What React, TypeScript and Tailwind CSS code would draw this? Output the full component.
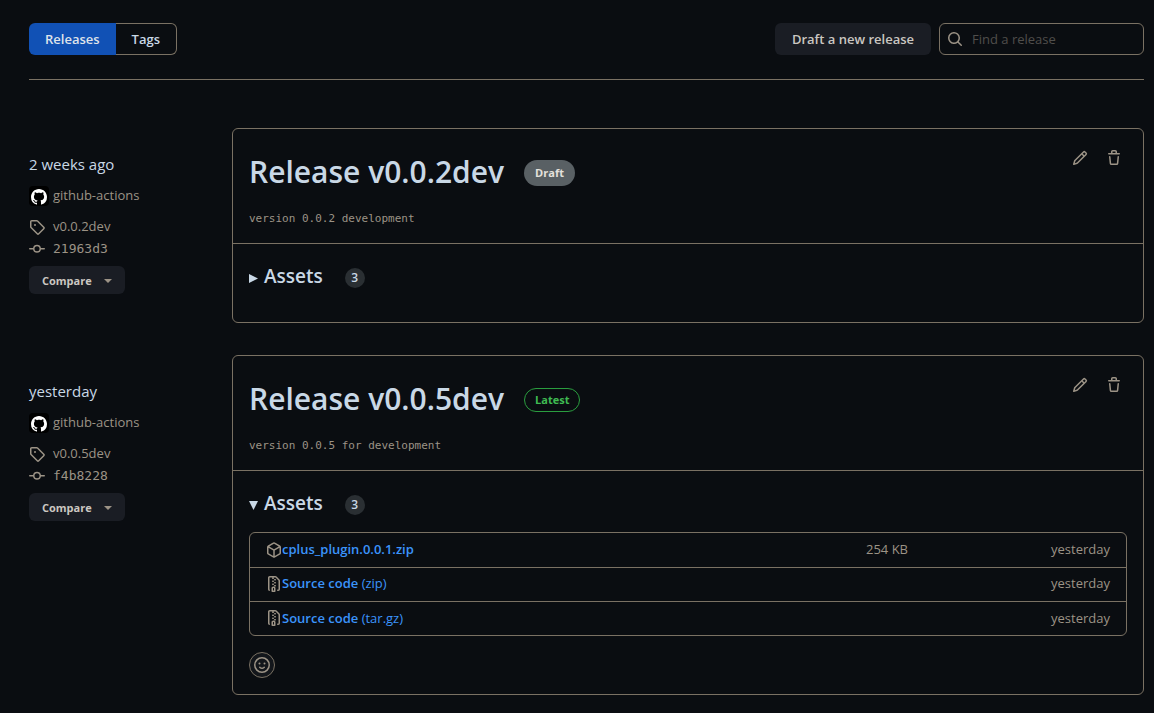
import { ReactNode } from "react";

const paths = {
  search:
    "M10.68 11.74a6 6 0 0 1-7.922-8.982 6 6 0 0 1 8.982 7.922l3.04 3.04a.749.749 0 0 1-.326 1.275.749.749 0 0 1-.734-.215ZM11.5 7a4.499 4.499 0 1 0-8.997 0A4.499 4.499 0 0 0 11.5 7Z",
  github:
    "M8 0c4.42 0 8 3.58 8 8a8.013 8.013 0 0 1-5.45 7.59c-.4.08-.55-.17-.55-.38 0-.27.01-1.13.01-2.2 0-.75-.25-1.23-.54-1.48 1.78-.2 3.65-.88 3.65-3.95 0-.88-.31-1.59-.82-2.15.08-.2.36-1.02-.08-2.12 0 0-.67-.22-2.2.82-.64-.18-1.32-.27-2-.27-.68 0-1.36.09-2 .27-1.53-1.03-2.2-.82-2.2-.82-.44 1.1-.16 1.92-.08 2.12-.51.56-.82 1.28-.82 2.15 0 3.06 1.86 3.75 3.64 3.95-.23.2-.44.55-.51 1.07-.46.21-1.61.55-2.33-.66-.15-.24-.6-.83-1.23-.82-.67.01-.27.38.01.53.34.19.73.9.82 1.13.16.45.68 1.31 2.69.94 0 .67.01 1.3.01 1.49 0 .21-.15.45-.55.38A7.995 7.995 0 0 1 0 8c0-4.42 3.58-8 8-8Z",
  tag: "M1 7.775V2.75C1 1.784 1.784 1 2.75 1h5.025c.464 0 .91.184 1.238.513l6.25 6.25a1.75 1.75 0 0 1 0 2.474l-5.026 5.026a1.75 1.75 0 0 1-2.474 0l-6.25-6.25A1.752 1.752 0 0 1 1 7.775Zm1.5 0c0 .066.026.13.073.177l6.25 6.25a.25.25 0 0 0 .354 0l5.025-5.025a.25.25 0 0 0 0-.354l-6.25-6.25a.25.25 0 0 0-.177-.073H2.75a.25.25 0 0 0-.25.25ZM6 5a1 1 0 1 1 0 2 1 1 0 0 1 0-2Z",
  commit:
    "M11.93 8.5a4.002 4.002 0 0 1-7.86 0H.75a.75.75 0 0 1 0-1.5h3.32a4.002 4.002 0 0 1 7.86 0h3.32a.75.75 0 0 1 0 1.5Zm-1.43-.75a2.5 2.5 0 1 0-5 0 2.5 2.5 0 0 0 5 0Z",
  pencil:
    "M11.013 1.427a1.75 1.75 0 0 1 2.474 0l1.086 1.086a1.75 1.75 0 0 1 0 2.474l-8.61 8.61c-.21.21-.47.364-.756.445l-3.251.93a.75.75 0 0 1-.927-.928l.929-3.25c.081-.286.235-.547.445-.758l8.61-8.61Zm.176 4.823L9.75 4.81l-6.286 6.287a.253.253 0 0 0-.064.108l-.558 1.953 1.953-.558a.253.253 0 0 0 .108-.064Zm1.238-3.763a.25.25 0 0 0-.354 0L10.811 3.75l1.439 1.44 1.263-1.263a.25.25 0 0 0 0-.354Z",
  trash:
    "M11 1.75V3h2.25a.75.75 0 0 1 0 1.5H2.75a.75.75 0 0 1 0-1.5H5V1.75C5 .784 5.784 0 6.75 0h2.5C10.216 0 11 .784 11 1.75ZM4.496 6.675l.66 6.6a.25.25 0 0 0 .249.225h5.19a.25.25 0 0 0 .249-.225l.66-6.6a.75.75 0 0 1 1.492.149l-.66 6.6A1.748 1.748 0 0 1 10.595 15h-5.19a1.75 1.75 0 0 1-1.741-1.575l-.66-6.6a.75.75 0 1 1 1.492-.15ZM6.5 1.75V3h3V1.75a.25.25 0 0 0-.25-.25h-2.5a.25.25 0 0 0-.25.25Z",
  package:
    "m8.878.392 5.25 3.045c.54.314.872.89.872 1.514v6.098a1.75 1.75 0 0 1-.872 1.514l-5.25 3.045a1.75 1.75 0 0 1-1.756 0l-5.25-3.045A1.75 1.75 0 0 1 1 11.049V4.951c0-.624.332-1.201.872-1.514L7.122.392a1.75 1.75 0 0 1 1.756 0ZM7.875 1.69l-4.63 2.685L8 7.133l4.755-2.758-4.63-2.685a.248.248 0 0 0-.25 0ZM2.5 5.677v5.372c0 .09.047.171.125.216l4.625 2.683V8.432Zm6.25 8.271 4.625-2.683a.25.25 0 0 0 .125-.216V5.677L8.75 8.432Z",
  zip: "M3.5 1.75v11.5c0 .09.048.173.126.217a.75.75 0 0 1-.752 1.298A1.748 1.748 0 0 1 2 13.25V1.75C2 .784 2.784 0 3.75 0h5.586c.464 0 .909.185 1.237.513l2.914 2.914c.329.328.513.773.513 1.237v8.586A1.75 1.75 0 0 1 12.25 15h-.5a.75.75 0 0 1 0-1.5h.5a.25.25 0 0 0 .25-.25V4.664a.25.25 0 0 0-.073-.177L9.513 1.573a.25.25 0 0 0-.177-.073H7.25a.75.75 0 0 1 0 1.5h-.5a.75.75 0 0 1 0-1.5h-3a.25.25 0 0 0-.25.25Zm3.75 8.75h.5c.966 0 1.75.784 1.75 1.75v3a.75.75 0 0 1-.75.75h-2.5a.75.75 0 0 1-.75-.75v-3c0-.966.784-1.75 1.75-1.75ZM6 5.25a.75.75 0 0 1 .75-.75h.5a.75.75 0 0 1 0 1.5h-.5A.75.75 0 0 1 6 5.25Zm.75 2.25h.5a.75.75 0 0 1 0 1.5h-.5a.75.75 0 0 1 0-1.5ZM8 6.75A.75.75 0 0 1 8.75 6h.5a.75.75 0 0 1 0 1.5h-.5A.75.75 0 0 1 8 6.75ZM8.75 3h.5a.75.75 0 0 1 0 1.5h-.5a.75.75 0 0 1 0-1.5ZM8 9.75A.75.75 0 0 1 8.75 9h.5a.75.75 0 0 1 0 1.5h-.5A.75.75 0 0 1 8 9.75Zm-1 2.5v2.25h1v-2.25a.25.25 0 0 0-.25-.25h-.5a.25.25 0 0 0-.25.25Z",
  smiley:
    "M8 0a8 8 0 1 1 0 16A8 8 0 0 1 8 0ZM1.5 8a6.5 6.5 0 1 0 13 0 6.5 6.5 0 0 0-13 0Zm3.82 1.636a.75.75 0 0 1 1.038.175l.007.009c.103.118.22.222.35.31.264.178.683.37 1.285.37.602 0 1.02-.192 1.285-.371.13-.088.247-.192.35-.31l.007-.008a.75.75 0 0 1 1.222.87c-.2.26-.44.49-.728.691-.474.322-1.18.63-2.126.63-.946 0-1.652-.308-2.126-.63a3.331 3.331 0 0 1-.729-.691.75.75 0 0 1 .189-1.055ZM6.5 6.5a1 1 0 1 1-2 0 1 1 0 0 1 2 0ZM11.5 6.5a1 1 0 1 1-2 0 1 1 0 0 1 2 0Z",
};

function Icon({ name, className = "size-4" }: { name: keyof typeof paths; className?: string }) {
  return (
    <svg viewBox="0 0 16 16" fill="currentColor" aria-hidden="true" className={`shrink-0 ${className}`}>
      <path d={paths[name]} />
    </svg>
  );
}

type Asset = { name: string; kind?: string; icon: "package" | "zip"; size?: string; date: string };

type Release = {
  date: string;
  tag: string;
  commit: string;
  notes: string;
  status: "Draft" | "Latest";
  assets?: Asset[];
};

const releases: Release[] = [
  { date: "2 weeks ago", tag: "v0.0.2dev", commit: "21963d3", notes: "version 0.0.2 development", status: "Draft" },
  {
    date: "yesterday",
    tag: "v0.0.5dev",
    commit: "f4b8228",
    notes: "version 0.0.5 for development",
    status: "Latest",
    assets: [
      { name: "cplus_plugin.0.0.1.zip", icon: "package", size: "254 KB", date: "yesterday" },
      { name: "Source code", kind: "(zip)", icon: "zip", date: "yesterday" },
      { name: "Source code", kind: "(tar.gz)", icon: "zip", date: "yesterday" },
    ],
  },
];

function MetaLink({ children, icon }: { children: ReactNode; icon: "tag" | "commit" }) {
  return (
    <a href="#" className="flex h-[22px] items-center gap-2">
      <Icon name={icon} />
      {children}
    </a>
  );
}

function Sidebar({ release }: { release: Release }) {
  return (
    <aside className="flex w-[203px] shrink-0 flex-col items-start pt-6 text-[13px] text-[#9c9386]">
      <div className="h-6 text-[15px] leading-6 text-[#c9d8e6]">{release.date}</div>
      <a href="#" className="mt-2 flex h-6 items-center gap-1">
        <span className="flex size-5 items-center justify-center rounded-sm bg-black pt-0.5 text-white">
          <Icon name="github" />
        </span>
        github-actions
      </a>
      <div className="mt-2">
        <MetaLink icon="tag">{release.tag}</MetaLink>
        <MetaLink icon="commit">
          <code className="font-['DejaVu_Sans_Mono',monospace] text-[13px]">{release.commit}</code>
        </MetaLink>
      </div>
      <button
        type="button"
        className="mt-[6px] flex h-7 items-center gap-3 rounded-md bg-[#1a1d24] px-[13px] pt-0.5 text-[11px] font-bold text-[#cbc7c1]"
      >
        Compare
        <svg viewBox="0 0 8 4" className="h-1 w-2" fill="#9c9386" aria-hidden="true">
          <path d="M0 0h8L4 4Z" />
        </svg>
      </button>
    </aside>
  );
}

function AssetTable({ assets }: { assets: Asset[] }) {
  return (
    <div className="mt-[11px] rounded-md border border-[#7a7163]">
      <table className="w-full text-[13px] text-[#9c9386]">
        <tbody>
          {assets.map((asset) => (
            <tr key={asset.name + asset.kind} className="h-[34px] border-b border-[#7a7163] last:border-b-0">
              <td className="pl-4">
                <div className="flex items-center">
                  <Icon name={asset.icon} />
                  <a href="#" className="text-[#3b94fb]">
                    <span className="font-semibold">{asset.name}</span>
                    {asset.kind && <span> {asset.kind}</span>}
                  </a>
                </div>
              </td>
              <td className="w-24 text-right">{asset.size}</td>
              <td className="w-[218px] pr-4 text-right">{asset.date}</td>
            </tr>
          ))}
        </tbody>
      </table>
    </div>
  );
}

function ReleaseCard({ release }: { release: Release }) {
  return (
    <article className="min-w-0 flex-1 rounded-md border border-[#7a7163]">
      <div className="flex h-[115px] items-start justify-between border-b border-[#7a7163] px-4 pt-[18px]">
        <div>
          <div className="flex h-12 items-center gap-5">
            <h2 className="text-[30px] font-semibold text-[#c9d8e6]">Release {release.tag}</h2>
            {release.status === "Draft" ? (
              <span className="mt-1 flex h-[26px] items-center rounded-full bg-[#596064] px-[11px] text-[11px] font-bold text-[#e4e1dc]">
                Draft
              </span>
            ) : (
              <span className="mt-1 flex h-6 items-center rounded-full border border-[#2a9d3f] px-[10px] text-[11px] font-bold text-[#3fba52]">
                Latest
              </span>
            )}
          </div>
          <p className="mt-3 font-['DejaVu_Sans_Mono',monospace] text-[11px] leading-6 text-[#9c9386]">
            {release.notes}
          </p>
        </div>
        <div className="flex gap-[18px] pt-[3px] pr-[5px] text-[#9c9386]">
          <button type="button" aria-label={`Edit ${release.tag}`}>
            <Icon name="pencil" />
          </button>
          <button type="button" aria-label={`Delete ${release.tag}`}>
            <Icon name="trash" />
          </button>
        </div>
      </div>
      <div className="px-4 pt-[14px] pb-4">
        <details open={!!release.assets} className="group">
          <summary className="flex h-9 list-none items-center text-[19px] font-semibold text-[#c9d8e6]">
            <svg
              viewBox="0 0 9 9"
              fill="currentColor"
              className="mt-1 mr-[6px] size-[9px] group-open:rotate-90"
              aria-hidden="true"
            >
              <path d="M0 0 9 4.5 0 9Z" />
            </svg>
            Assets
            <span className="mt-1 ml-[22px] flex size-5 items-center justify-center rounded-full bg-[#2a2f33] text-[12px]">
              3
            </span>
          </summary>
          {release.assets && <AssetTable assets={release.assets} />}
        </details>
        {release.assets ? (
          <button
            type="button"
            aria-label="Add reaction"
            className="mt-4 flex size-[26px] items-center justify-center rounded-full border border-[#7a7163] bg-[#13161b] text-[#9c9386]"
          >
            <Icon name="smiley" />
          </button>
        ) : (
          <div className="h-3" />
        )}
      </div>
    </article>
  );
}

export default function App() {
  return (
    <main className="min-h-screen bg-[#0a0d11] pt-[23px] pr-[10px] pb-[18px] pl-[29px] font-['Open_Sans','Noto_Sans',sans-serif]">
      <header className="flex items-center justify-between border-b border-[#7a7163] pb-6 text-[13px]">
        <nav className="flex h-8 font-semibold">
          <a href="#" className="flex items-center rounded-l-md bg-[#1151b5] px-4 pt-0.5 text-[#dfe3ea]">
            Releases
          </a>
          <a
            href="#"
            className="flex items-center rounded-r-md border border-l-0 border-[#7a7163] px-4 pt-0.5 text-[#c9d8e6]"
          >
            Tags
          </a>
        </nav>
        <div className="flex gap-2">
          <button type="button" className="h-8 rounded-md bg-[#1a1d24] px-[17px] pt-0.5 font-semibold text-[#cbc7c1]">
            Draft a new release
          </button>
          <label className="flex h-8 w-[205px] items-center gap-[9px] rounded-md border border-[#7a7163] px-[7px] text-[#9c9386]">
            <Icon name="search" />
            <input
              type="search"
              aria-label="Find a release"
              placeholder="Find a release"
              className="w-full min-w-0 bg-transparent pt-0.5 outline-none placeholder:text-[#504e4b]"
            />
          </label>
        </div>
      </header>
      <div className="flex flex-col gap-8 pt-12">
        {releases.map((release) => (
          <section key={release.tag} className="flex">
            <Sidebar release={release} />
            <ReleaseCard release={release} />
          </section>
        ))}
      </div>
    </main>
  );
}
